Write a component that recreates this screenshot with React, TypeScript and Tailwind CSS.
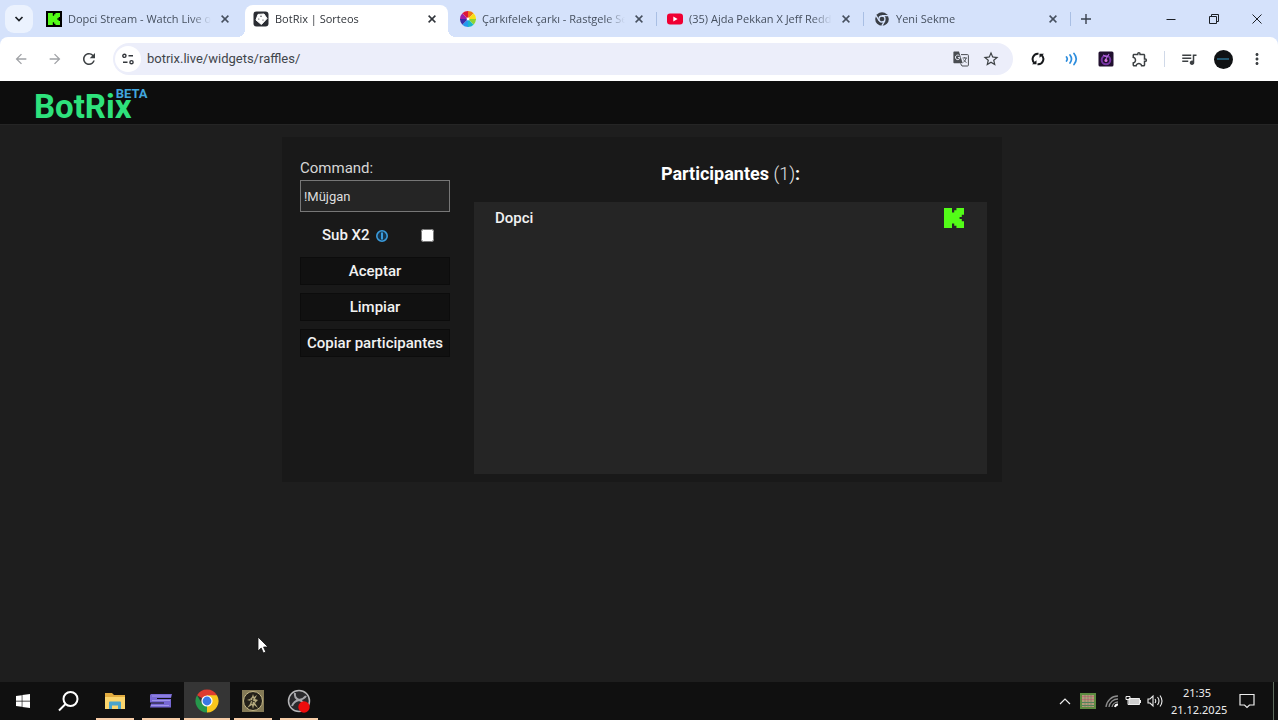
import type { ReactNode } from "react";
import clsx from "clsx";
import { FaWindows } from "react-icons/fa";
import { MdArrowBack, MdArrowForward, MdMoreVert, MdOutlineExtension, MdOutlineQueueMusic, MdRefresh, MdStarOutline } from "react-icons/md";

function KickMark({ className }: { className?: string }) {
  return (
    <svg viewBox="0 0 9 9" preserveAspectRatio="none" fill="#53fc18" className={className}>
      <path d="M0 0h3.6v2h1V1h1V0H9v3H8v1H7v1h1v1h1v3H5.600V8h-1V7h-1v2H0z" />
    </svg>
  );
}

function KickIcon() {
  return (
    <span className="flex size-4 items-center justify-center bg-black">
      <KickMark className="size-3" />
    </span>
  );
}

function DiceIcon() {
  return (
    <svg viewBox="0 0 16 16" className="size-4">
      <rect x="0.5" y="0.5" width="15" height="15" rx="3" fill="#2b2d33" />
      <path d="M5 3.4 11 3l3 4.500-5.600 6L3 9z" fill="#fff" stroke="#fff" strokeLinejoin="round" />
      <circle cx="8" cy="5.2" r="0.7" fill="#2b2d33" />
      <circle cx="5.8" cy="8" r="0.6" fill="#2b2d33" />
      <circle cx="10" cy="9" r="0.6" fill="#2b2d33" />
    </svg>
  );
}

function WheelIcon() {
  return (
    <svg viewBox="0 0 16 16" className="size-4">
      <circle cx="8" cy="8" r="8" fill="#fff" />
      <path d="M8 8V0A8 8 0 0 1 13.7 2.3z" fill="#ee7a17" />
      <path d="M8 8 13.7 2.3A8 8 0 0 1 16 8z" fill="#f7e017" />
      <path d="M8 8h8a8 8 0 0 1-2.3 5.7z" fill="#8fd435" />
      <path d="M8 8l5.7 5.7A8 8 0 0 1 8 16z" fill="#19b5c9" />
      <path d="M8 8v8a8 8 0 0 1-5.7-2.3z" fill="#2397ee" />
      <path d="M8 8l-5.7 5.7A8 8 0 0 1 0 8z" fill="#3c2ea8" />
      <path d="M8 8H0a8 8 0 0 1 2.3-5.7z" fill="#9a1fa8" />
      <path d="M8 8 2.3 2.3A8 8 0 0 1 8 0z" fill="#df1738" />
      <circle cx="8" cy="8" r="1.4" fill="#fff" />
    </svg>
  );
}

function YoutubeIcon() {
  return (
    <svg viewBox="0 0 16 16" className="size-4">
      <rect y="2.5" width="16" height="11" rx="3" fill="#f00033" />
      <path d="M6.3 5.6v4.8L10.6 8z" fill="#fff" />
    </svg>
  );
}

function ChromeMono() {
  return (
    <svg viewBox="0 0 16 16" className="size-4">
      <circle cx="8" cy="8" r="6.8" fill="#3a3f47" />
      <circle cx="8" cy="8" r="3" fill="#3a3f47" stroke="#d5e2fb" strokeWidth="1.3" />
      <path d="M8 4.7h6.2M5.1 9.6 2 4.3M10.9 9.6 7.8 14.8" stroke="#d5e2fb" strokeWidth="1.3" />
    </svg>
  );
}

function TranslateIcon() {
  return (
    <svg viewBox="0 0 16 16" className="size-4" fill="none">
      <path d="M8 3.6h6.5q.9 0 .9.9v9.6q0 .9-.9.9H9l-1.500-2.500" stroke="#4a4d52" />
      <path d="M1.200.5H6l3.700 11.700H1.200q-.8 0-.8-.8V1.300q0-.8.8-.8z" fill="#4a4d52" />
      <path d="M6.5 4.900A2.300 2.300 0 1 0 7 6.600H4.900" stroke="#eceefa" />
      <path d="M9.5 7h4.500M11.700 6v1M13.200 7q-.8 3-3 4.500M10.500 8.500q1 2 3 3" stroke="#4a4d52" strokeWidth="0.9" />
    </svg>
  );
}

function CloseGlyph() {
  return (
    <svg viewBox="0 0 8 8" className="size-2" fill="none" stroke="currentColor" strokeWidth="1.5">
      <path d="M.6.6l6.8 6.8M7.4.6.6 7.4" />
    </svg>
  );
}

const tabs = [
  { title: "Dopci Stream - Watch Live o", icon: <KickIcon />, active: false, divider: false },
  { title: "BotRix | Sorteos", icon: <DiceIcon />, active: true, divider: false },
  { title: "Çarkıfelek çarkı - Rastgele Se", icon: <WheelIcon />, active: false, divider: true },
  { title: "(35) Ajda Pekkan X Jeff Redd", icon: <YoutubeIcon />, active: false, divider: true },
  { title: "Yeni Sekme", icon: <ChromeMono />, active: false, divider: true }
];

function TabStrip() {
  return (
    <div className="flex h-[37px] bg-[#d5e2fb] pl-[5px]">
      <button aria-label="Sekmelerde ara" className="mt-[5px] flex size-7 shrink-0 items-center justify-center rounded-[9px] bg-[#ebf2fe]">
        <svg viewBox="0 0 10 10" className="size-2.5" fill="none" stroke="#1c2026" strokeWidth="1.7">
          <path d="M1.5 3 5 6.5 8.5 3" />
        </svg>
      </button>
      <div className="ml-[5px] flex min-w-0 flex-1">
        {tabs.map((tab) => (
          <div
            key={tab.title}
            className={clsx(
              "relative mt-[5px] flex h-8 min-w-0 max-w-[207px] flex-1 items-center pb-1 pl-2 pr-3",
              tab.active ? "text-[#30343a]" : "text-[#46505f]"
            )}
          >
            {tab.active && (
              <span className="absolute inset-y-0 left-0 right-1 rounded-t-lg bg-white before:absolute before:-left-2 before:bottom-0 before:size-2 before:bg-[radial-gradient(circle_at_0_0,transparent_8px,#fff_8px)] before:content-[''] after:absolute after:-right-2 after:bottom-0 after:size-2 after:bg-[radial-gradient(circle_at_100%_0,transparent_8px,#fff_8px)] after:content-['']" />
            )}
            <span className="relative shrink-0">{tab.icon}</span>
            <span className="relative ml-1.5 min-w-0 flex-1 overflow-hidden whitespace-nowrap text-[11px] [mask-image:linear-gradient(90deg,#000_calc(100%-20px),transparent)]">
              {tab.title}
            </span>
            <button aria-label="Kapat" className="relative ml-1.5 flex size-4 shrink-0 items-center justify-center">
              <CloseGlyph />
            </button>
            {tab.divider && <span className="absolute right-0.5 top-[7px] h-3.5 w-px bg-[#a9bfe4]" />}
          </div>
        ))}
        <button aria-label="Yeni sekme" className="mt-[5px] flex h-7 w-[26px] shrink-0 items-center justify-center">
          <svg viewBox="0 0 10 10" className="size-2.5" stroke="#39414d" strokeWidth="1.4">
            <path d="M5 0v10M0 5h10" />
          </svg>
        </button>
      </div>
      <div className="flex shrink-0 text-[#1c2026]">
        <WindowButton label="Küçült">
          <path d="M.5 5.5h9" />
        </WindowButton>
        <WindowButton label="Geri yükle">
          <path d="M.5 2.5h7v7h-7zM2.5 2.5v-2h7v7h-2" />
        </WindowButton>
        <WindowButton label="Pencereyi kapat">
          <path d="M.5.5l9 9M9.5.5l-9 9" />
        </WindowButton>
      </div>
    </div>
  );
}

function WindowButton({ label, children }: { label: string; children: ReactNode }) {
  return (
    <button aria-label={label} className="flex w-[43px] items-center justify-center">
      <svg viewBox="0 0 10 10" className="size-2.5" fill="none" stroke="currentColor">
        {children}
      </svg>
    </button>
  );
}

function ToolButton({ label, children }: { label: string; children: ReactNode }) {
  return (
    <button aria-label={label} className="flex h-8 w-[34px] shrink-0 items-center justify-center">
      {children}
    </button>
  );
}

function Toolbar() {
  return (
    <div className="bg-[#d5e2fb]">
      <div className="flex h-11 items-center rounded-t-lg bg-white px-1 text-[#3c4043]">
        <ToolButton label="Geri">
          <MdArrowBack className="size-4 text-[#a0a2a6]" />
        </ToolButton>
        <ToolButton label="İleri">
          <MdArrowForward className="size-4 text-[#a0a2a6]" />
        </ToolButton>
        <ToolButton label="Yenile">
          <MdRefresh className="size-[18px]" />
        </ToolButton>
        <div className="ml-[7px] flex h-8 min-w-0 flex-1 items-center rounded-full bg-[#eceefa] pl-0.5 pr-[7px]">
          <button aria-label="Site bilgileri" className="flex size-[26px] shrink-0 items-center justify-center rounded-full bg-white">
            <svg viewBox="0 0 12 12" className="size-3" fill="none" stroke="#33363b" strokeWidth="1.4">
              <circle cx="2.4" cy="2.8" r="1.6" />
              <path d="M6.5 2.8H11M1 9.2h4.5" />
              <circle cx="9.5" cy="9.2" r="1.6" />
            </svg>
          </button>
          <input
            aria-label="Adres çubuğu"
            defaultValue="botrix.live/widgets/raffles/"
            className="ml-1.5 min-w-0 flex-1 bg-transparent font-[Roboto,sans-serif] text-[13px] text-[#41454b] outline-none"
          />
          <button aria-label="Çevir" className="flex w-[30px] justify-center">
            <TranslateIcon />
          </button>
          <button aria-label="Yer işareti" className="flex w-[30px] justify-center">
            <MdStarOutline className="size-[18px]" />
          </button>
        </div>
        <div className="ml-2 flex items-center">
          <ToolButton label="Eklenti 1">
            <svg viewBox="0 0 14 14" className="size-3.5" fill="none" stroke="#17191c" strokeWidth="2">
              <path d="M3.6 11A5.200 5.200 0 0 1 7.500 1.800M10.400 3A5.200 5.200 0 0 1 6.500 12.200" />
              <path d="M1 12.300h4.500V8.300zM13 1.700H8.500v4z" fill="#17191c" stroke="none" />
            </svg>
          </ToolButton>
          <ToolButton label="Eklenti 2">
            <svg viewBox="0 0 14 14" className="size-3.5" fill="none" stroke="#2d8ddd" strokeWidth="1.7" strokeLinecap="round">
              <path d="M1.5 5q1.5 2 0 4M5 3q3 4 0 8M9 1.5q4.5 5.5 0 11" />
            </svg>
          </ToolButton>
          <ToolButton label="Eklenti 3">
            <svg viewBox="0 0 16 16" className="size-4">
              <rect x="0.5" y="0.5" width="15" height="15" rx="1.5" fill="#21102f" />
              <circle cx="8" cy="9" r="4.3" fill="none" stroke="#7634a3" strokeWidth="2" />
              <path d="M7 9.5 11 3M5 4 9 6" stroke="#b269d8" strokeWidth="1.2" />
              <circle cx="8" cy="9.5" r="1.5" fill="#dc77df" />
            </svg>
          </ToolButton>
          <ToolButton label="Uzantılar">
            <MdOutlineExtension className="size-[18px]" />
          </ToolButton>
          <span className="mx-[7px] h-4 w-px shrink-0 bg-[#d0d9e8]" />
          <ToolButton label="Medya">
            <MdOutlineQueueMusic className="size-[18px]" />
          </ToolButton>
          <ToolButton label="Profil">
            <span className="flex size-[19px] items-center justify-center rounded-full bg-[#101214]">
              <span className="h-0.5 w-3 bg-[#23566e]" />
            </span>
          </ToolButton>
          <ToolButton label="Menü">
            <MdMoreVert className="size-[18px]" />
          </ToolButton>
        </div>
      </div>
    </div>
  );
}

function RaffleButton({ children }: { children: ReactNode }) {
  return (
    <button className="h-7 w-full border border-[#0c0c0c] bg-[#111] text-[15px] font-medium leading-5 text-[#f2f2f2]">
      {children}
    </button>
  );
}

const participants = ["Dopci"];

function Raffle() {
  return (
    <section className="ml-1.5 flex w-full max-w-[720px] bg-[#191919] pb-2 pl-[18px] pr-[15px]">
      <div className="flex w-[150px] shrink-0 flex-col gap-2 pt-[19px] text-[#f2f2f2]">
        <label className="text-[15px] leading-6 text-[#d6d6d6]">
          Command:
          <input
            defaultValue="!Müjgan"
            className="block h-8 w-full border border-[#777] bg-[#252525] px-[3px] text-[13px] text-[#dedede] outline-none"
          />
        </label>
        <div className="flex h-[29px] items-center pl-[22px] pr-4 pt-0.5">
          <label htmlFor="sub-x2" className="text-[15px] font-medium">
            Sub X2
          </label>
          <svg viewBox="0 0 12 12" className="ml-1.5 size-3" stroke="#3a9bdc">
            <circle cx="6" cy="6" r="5.2" fill="#17344b" strokeWidth="1.6" />
            <path d="M6 2.500v7" strokeWidth="2" />
          </svg>
          <input id="sub-x2" type="checkbox" className="ml-auto size-[13px]" />
        </div>
        <RaffleButton>Aceptar</RaffleButton>
        <RaffleButton>Limpiar</RaffleButton>
        <RaffleButton>Copiar participantes</RaffleButton>
      </div>
      <div className="ml-6 min-w-0 flex-1">
        <h1 className="pb-4 pt-[25px] text-center text-[18px] font-bold leading-6 text-white">
          Participantes <span className="font-light text-[#e4e4e4]">(1)</span>:
        </h1>
        <ul className="min-h-[272px] bg-[#252525]">
          {participants.map((name) => (
            <li key={name} className="flex h-8 items-center justify-between pl-[21px] pr-[23px] text-[15px] font-medium text-[#f2f2f2]">
              {name}
              <KickMark className="size-5" />
            </li>
          ))}
        </ul>
      </div>
    </section>
  );
}

function TaskButton({ label, active, open, children }: { label: string; active?: boolean; open?: boolean; children: ReactNode }) {
  return (
    <button
      aria-label={label}
      className={clsx("relative flex w-[46px] shrink-0 items-center justify-center", active && "bg-[#353535]")}
    >
      {children}
      {open && <span className={clsx("absolute bottom-0 h-0.5 bg-[#f7cda8]", active ? "inset-x-0" : "inset-x-1")} />}
    </button>
  );
}

function Taskbar() {
  return (
    <footer className="flex h-[38px] justify-between bg-[#101010] text-[#ededed]">
      <div className="flex">
        <TaskButton label="Başlat">
          <FaWindows className="size-4 text-white" />
        </TaskButton>
        <TaskButton label="Ara">
          <svg viewBox="0 0 22 22" className="size-[22px]" fill="none" stroke="#fff" strokeWidth="2">
            <circle cx="12.5" cy="9" r="7" />
            <path d="M7.5 14 1 20.5" />
          </svg>
        </TaskButton>
        <TaskButton label="Dosya Gezgini" open>
          <svg viewBox="0 0 22 18" className="h-[18px] w-[22px]">
            <path d="M1 1h7l2 2h11v14H1z" fill="#e2ac40" />
            <path d="M1 5h20v12H1z" fill="#fbd56d" />
            <path d="M5 17v-6.5q0-1 1-1h10q1 0 1 1V17h-3v-3.5H8V17z" fill="#4ba3cc" />
          </svg>
        </TaskButton>
        <TaskButton label="Uygulama" open>
          <svg viewBox="0 0 24 16" className="h-4 w-6">
            <path d="M2 1h21l-1 4H8v1h14v8.5H1l1-4h13v-1H1V2z" fill="#7768d4" />
            <path d="M3 3h19M3 7.5h18M2 12.5h18" stroke="#aaa2ee" strokeWidth="0.8" />
          </svg>
        </TaskButton>
        <TaskButton label="Google Chrome" active open>
          <svg viewBox="0 0 24 24" className="size-6">
            <path d="M12 12 2.04 6.25A11.5 11.5 0 0 1 21.96 6.25z" fill="#dd3b30" />
            <path d="M12 12V6.25h9.96A11.5 11.5 0 0 1 12 23.5z" fill="#f7c61c" />
            <path d="M12 12 12 23.5A11.5 11.5 0 0 1 2.04 6.25L7 14.5z" fill="#26974b" />
            <path d="M12 23.5l5-8.6-5-2.9z" fill="#f7c61c" />
            <circle cx="12" cy="12" r="5.6" fill="#fff" />
            <circle cx="12" cy="12" r="4.4" fill="#3978e5" />
          </svg>
        </TaskButton>
        <TaskButton label="Oyun" open>
          <svg viewBox="0 0 22 22" className="size-[22px]">
            <path d="M0 0h22v22H0z" fill="#847a56" />
            <circle cx="11" cy="11" r="9.5" fill="#242119" stroke="#c6b989" />
            <path d="M7 3l3 4-2 2-3 1 4 1-1 3-3 4 5-3 1 4 1-4 4 3-3-5 3-3-3-1 2-4-3 2-1-3-1 3z" fill="#b4aa7e" />
            <path d="M8 10l5 2M11 8l-1 6" stroke="#332e20" />
          </svg>
        </TaskButton>
        <TaskButton label="OBS Studio" open>
          <svg viewBox="0 0 24 24" className="size-6">
            <circle cx="12" cy="12" r="10.5" fill="#29292c" stroke="#b6b6b8" strokeWidth="1.5" />
            <path d="M8 4q-1 5 4 7 5-1 7-4M12 11q-5 1-7 6M12 11q5 1 5 8" fill="none" stroke="#a6a6aa" strokeWidth="2" />
            <circle cx="17" cy="18" r="5.7" fill="#ed0c0c" />
          </svg>
        </TaskButton>
      </div>
      <div className="flex items-center">
        <svg viewBox="0 0 12 8" className="h-2 w-3" fill="none" stroke="currentColor" strokeWidth="1.2">
          <path d="M1 7 6 2l5 5" />
        </svg>
        <svg viewBox="0 0 16 16" className="ml-[9px] size-4">
          <path d="M0 0h16v16H0z" fill="#5c8b40" />
          <path d="M2 2h12v12H2z" fill="#b49b79" />
          <path d="M2 3.5h12M2 6.5h12" stroke="#c26f76" />
          <path d="M2 9.5h12M2 12.5h12" stroke="#4b855b" />
          <path d="M5 2v12M8 2v12M11 2v12" stroke="#697c61" strokeWidth="0.6" />
        </svg>
        <svg viewBox="0 0 14 14" className="ml-[9px] size-3.5" fill="none" stroke="#8d8d8d" strokeWidth="1.3">
          <path d="M1 13A12 12 0 0 1 13 2M4 13a9 9 0 0 1 9-8M7 13a6 6 0 0 1 6-5" />
          <path d="M10 13a3 3 0 0 1 3-2.5" stroke="#fff" strokeWidth="2" />
        </svg>
        <svg viewBox="0 0 16 12" className="ml-1.5 h-3 w-4" fill="none" stroke="#ededed">
          <path d="M4 3.5h10.5v6H4z" fill="#cfcfcf" />
          <path d="M15.5 5v3M1 1.5h4v3H1zM3 4.5v5h2" />
        </svg>
        <svg viewBox="0 0 16 14" className="ml-1.5 h-3.5 w-4" fill="none" stroke="#ededed" strokeWidth="1.1">
          <path d="M1 5h2l3-3v10L3 9H1zM8 5q1.5 2 0 4M10.5 3q3 4 0 8M13 1.5q4 5.5 0 11" />
        </svg>
        <div className="ml-2 w-[52px] text-center font-['Noto_Sans',sans-serif] text-[11px] leading-[17px]">
          <p>21:35</p>
          <p>21.12.2025</p>
        </div>
        <button aria-label="Bildirimler" className="ml-4 mr-[18px]">
          <svg viewBox="0 0 16 16" className="size-4" fill="none" stroke="currentColor" strokeWidth="1.2">
            <path d="M1 1.5h14v10.500h-4.500L8 14.500 5.500 12H1z" />
          </svg>
        </button>
        <span className="mr-1 h-full w-px bg-[#5d6b5d]" />
      </div>
    </footer>
  );
}

export default function App() {
  return (
    <div className="flex min-h-screen flex-col overflow-hidden bg-[#1e1e1e] font-['Open_Sans',sans-serif]">
      <TabStrip />
      <Toolbar />
      <div className="relative flex flex-1 flex-col font-[Roboto,sans-serif]">
        <header className="flex h-11 items-center border-b border-[#252525] bg-[#0d0d0d] pl-[34px]">
          <a href="#" className="relative pt-2 text-[33px] font-bold leading-9 text-[#2ee27c]">
            BotRix
            <span className="absolute -right-4 top-[5px] text-[13px] leading-4 text-[#41a5dd]">BETA</span>
          </a>
        </header>
        <main className="flex justify-center px-4 pt-3">
          <Raffle />
        </main>
        <svg viewBox="0 0 12 18" className="absolute bottom-7 left-[257px] h-[18px] w-3">
          <path d="M1 1v14l3.200-3 2.200 5 2.400-1-2.200-5H11z" fill="#fff" stroke="#111" strokeWidth="0.8" />
        </svg>
      </div>
      <Taskbar />
    </div>
  );
}
